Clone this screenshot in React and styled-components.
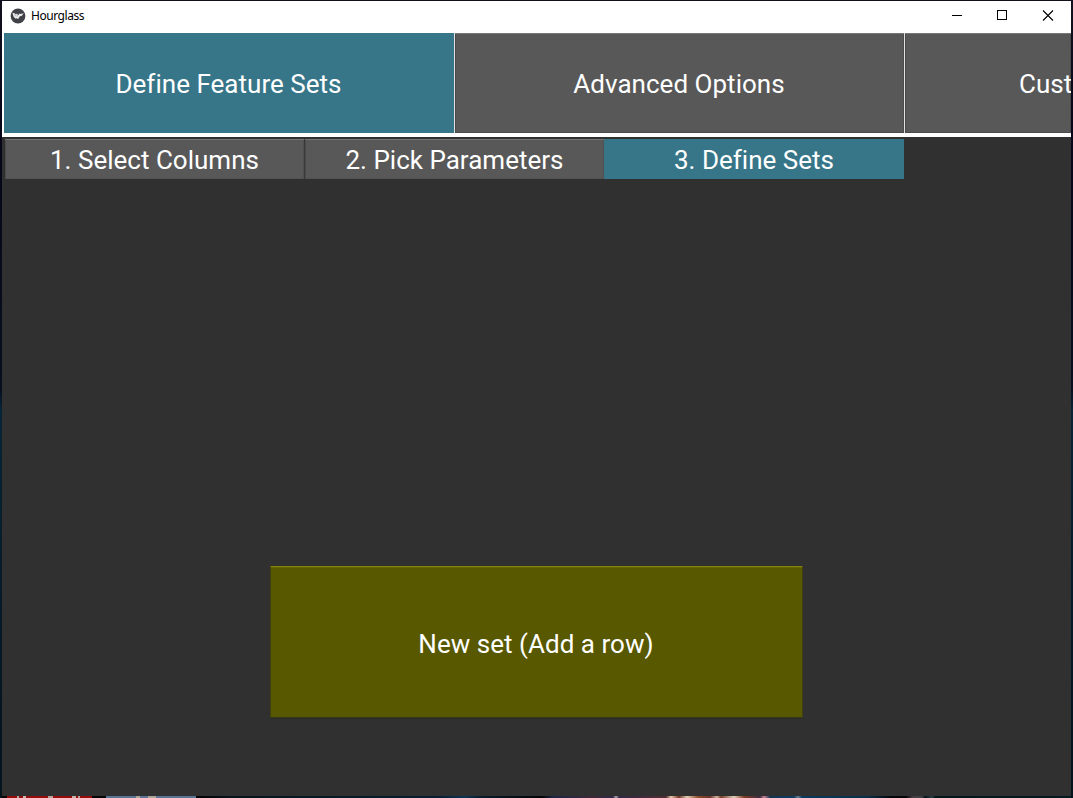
import React from 'react';
import styled, { createGlobalStyle } from 'styled-components';

const Global = createGlobalStyle`
  * { box-sizing: border-box; }
  body { margin: 0; overflow: hidden; background: #0c0c1c; }
  button { appearance: none; border: 0; padding: 0; margin: 0; border-radius: 0; background: none; }
`;

const Desktop = styled.div`
  width: 1073px;
  height: 798px;
  padding: 1px 2px 0;
  overflow: hidden;
  background: linear-gradient(180deg, #11111f 0, #060618 130px, #07101f 390px, #062536 410px, #071a29 600px, #04131c 100%);
  font-family: Roboto, "Liberation Sans", sans-serif;
`;

const Window = styled.main`
  width: 1069px;
  height: 795px;
  display: flex;
  flex-direction: column;
  overflow: hidden;
  background: #303030;
`;

const TitleBar = styled.header`
  height: 32px;
  flex: none;
  display: flex;
  align-items: center;
  padding: 0 0 3px 8px;
  background: #fff;
`;

const Title = styled.span`
  flex: 1;
  margin-left: 5px;
  color: #000;
  font: 12px/16px "Noto Sans", sans-serif;
  letter-spacing: -0.45px;
`;

const WindowButton = styled.button`
  width: ${p => p.$width}px;
  height: 28px;
  display: grid;
  place-items: center;
`;

const MainTabs = styled.nav`
  height: 104px;
  flex: none;
  display: flex;
  padding: 0 0 4px 2px;
  overflow: hidden;
  background: #fff;
`;

const MainTab = styled.button`
  width: ${p => p.$clipped ? 167 : 450}px;
  height: 100px;
  flex: none;
  overflow: hidden;
  color: #fff;
  font: 26px/30px Roboto, sans-serif;
  letter-spacing: 0.02px;
  text-align: ${p => p.$clipped ? 'left' : 'center'};
  padding: ${p => p.$clipped ? '2px 0 0 114px' : '2px 1px 0 0'};
  background: ${p => p.$active ? '#377588' : '#585858'};
  border-left: ${p => p.$active ? '0' : '1px solid #e2e2e2'};
  box-shadow: ${p => p.$active ? 'none' : 'inset 0 1px #777, inset 1px 0 #494949, inset -1px -1px #4b4b4b'};
`;

const StepTabs = styled.nav`
  height: 42px;
  flex: none;
  display: flex;
  padding: 2px 0 0 3px;
`;

const StepTab = styled.button`
  width: ${p => p.$width}px;
  height: 40px;
  color: #fff;
  font: 26px/30px Roboto, sans-serif;
  letter-spacing: 0.01px;
  padding-top: 2px;
  background: ${p => p.$active ? '#377588' : '#585858'};
  border-right: ${p => p.$divided ? '1px solid #3a3a3a' : '0'};
  box-shadow: ${p => p.$active ? 'none' : 'inset 0 1px #777, inset 1px 0 #4b4b4b, inset -1px -1px #505050'};
`;

const Workspace = styled.section`
  flex: 1;
  display: flex;
  flex-direction: column;
  justify-content: flex-end;
  align-items: flex-start;
  padding: 0 0 78px 268px;
`;

const AddButton = styled.button`
  width: 533px;
  height: 152px;
  color: #fff;
  font: 26px/30px Roboto, sans-serif;
  letter-spacing: 0.03px;
  padding: 4px 1px 0 0;
  background: #585800;
  border: 1px solid #40400f;
  border-top: 1px solid #83830c;
  border-bottom: 1px solid #383818;
  border-radius: 1px;
  box-shadow: inset 0 1px #666600, 0 1px #2b2b2b;
`;

const DesktopEdge = styled.div`
  height: 2px;
  width: 1069px;
  background: linear-gradient(90deg,
    #080808 0 5px, #940c0c 5px 15px, #b7aaa2 15px 17px, #940c0c 17px 21px, #c6b9ac 21px 24px,
    #940c0c 24px 46px, #baa69c 46px 51px, #940c0c 51px 70px, #c4b5aa 70px 74px, #940c0c 74px 76px,
    #baa69c 76px 78px, #940c0c 78px 90px, #050505 90px 104px, #587596 104px 134px, #aaa598 134px 138px,
    #587596 138px 146px, #aaa598 146px 154px, #587596 154px 194px, #030405 194px 200px, #07141c 230px,
    #061b25 340px, #081d31 435px, #0c3555 462px, #081b2a 480px, #030506 540px, #1c2745 551px,
    #3d2938 590px, #302947 611px, #b5a7ad 614px, #302844 617px, #512d33 664px, #eacaad 669px,
    #6b3420 677px, #dfcfb3 685px, #8d4b2b 696px, #673328 708px, #d0b29b 715px, #733b24 719px,
    #ddcfb8 732px, #7e3c21 742px, #3c2c43 758px, #ca8094 762px, #123552 768px, #103c60 792px,
    #668094 796px, #0b395a 800px, #08304b 865px, #030609 890px, #050607 904px, #473e43 911px,
    #3d4147 920px, #05131a 923px, #283f46 930px, #04171b 933px, #041a20 100%);
`;

function AppIcon() {
  return <svg width="16" height="16" viewBox="0 0 16 16" aria-hidden="true">
    <circle cx="8" cy="8" r="7.4" fill="#404247" />
    <path d="M2.4 4.8 5 5.4 6 6.6 7 5.6 8.4 7.2 9.4 5.5 10.6 6.1 13.7 5.3 11.6 8 9.8 8.2 8.2 10.9 6.6 10.2 5.2 10.6 3.5 8.6Z" fill="#eee" />
    <path d="m4.6 6.2 1.2 2.2M7.4 6.6l-.4 2" stroke="#8a8a8e" strokeWidth=".6" />
  </svg>;
}

function ControlIcon({ kind }) {
  return <svg width="12" height="12" viewBox="0 0 12 12" fill="none" stroke="#000" strokeWidth="1" aria-hidden="true">
    {kind === 'minimize' && <path d="M1 5.5h10" shapeRendering="crispEdges" />}
    {kind === 'maximize' && <path d="M1.5 .5h9v9h-9z" shapeRendering="crispEdges" />}
    {kind === 'close' && <path d="m1 .5 10 10M11 .5 1 10.5" strokeWidth="1.1" />}
  </svg>;
}

export default function App() {
  return <>
    <Global />
    <Desktop>
      <Window>
        <TitleBar>
          <AppIcon />
          <Title>Hourglass</Title>
          <WindowButton $width={44} aria-label="Minimize"><ControlIcon kind="minimize" /></WindowButton>
          <WindowButton $width={46} aria-label="Maximize"><ControlIcon kind="maximize" /></WindowButton>
          <WindowButton $width={46} aria-label="Close"><ControlIcon kind="close" /></WindowButton>
        </TitleBar>
        <MainTabs>
          <MainTab $active>Define Feature Sets</MainTab>
          <MainTab>Advanced Options</MainTab>
          <MainTab $clipped>Cust</MainTab>
        </MainTabs>
        <StepTabs>
          <StepTab $width={300} $divided>1. Select Columns</StepTab>
          <StepTab $width={299}>2. Pick Parameters</StepTab>
          <StepTab $width={300} $active>3. Define Sets</StepTab>
        </StepTabs>
        <Workspace>
          <AddButton>New set (Add a row)</AddButton>
        </Workspace>
      </Window>
      <DesktopEdge />
    </Desktop>
  </>;
}
